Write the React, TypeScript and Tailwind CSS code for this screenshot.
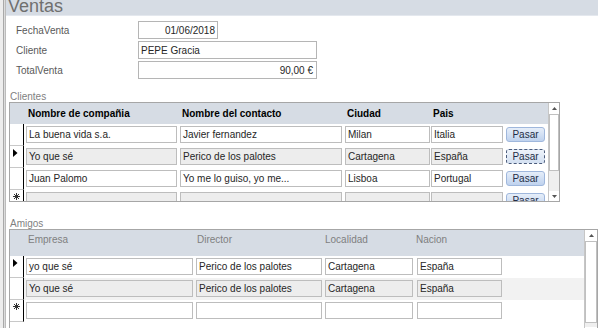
import React from "react";

const F = { fontFamily: '"Liberation Sans", Arial, sans-serif' };

function Field({ w, text = "", gray = false, right = false, cls = "" }: { w: string; text?: string; gray?: boolean; right?: boolean; cls?: string }) {
  return (
    <div
      className={`${w} ${cls} h-[17px] shrink-0 border border-[#bdbdbd] ${gray ? "bg-[#ededed]" : "bg-white"} flex items-center px-[2px] overflow-hidden whitespace-nowrap text-[10px] leading-[12px] text-[#262626] ${right ? "justify-end" : ""}`}
    >
      {text}
    </div>
  );
}

function Arrow() {
  return (
    <svg width="5" height="8" viewBox="0 0 5 8" className="mt-[3px] ml-[3px]">
      <path d="M0 0 L4.5 4 L0 8 Z" fill="#000" />
    </svg>
  );
}

function Star() {
  return (
    <svg width="7" height="7" viewBox="0 0 7 7" className="mt-[3px] ml-[3px]">
      <g stroke="#333" strokeWidth="1">
        <line x1="3.5" y1="0" x2="3.5" y2="7" />
        <line x1="0" y1="3.5" x2="7" y2="3.5" />
        <line x1="1" y1="1" x2="6" y2="6" />
        <line x1="6" y1="1" x2="1" y2="6" />
      </g>
    </svg>
  );
}

function Selector({ kind }: { kind?: "arrow" | "star" }) {
  return (
    <div className="w-[14px] h-full shrink-0 border-r border-r-black border-b border-b-[#c8c8c8] bg-white flex items-start">
      {kind === "arrow" ? <Arrow /> : kind === "star" ? <Star /> : null}
    </div>
  );
}

function Pasar({ focus = false }: { focus?: boolean }) {
  return (
    <div
      className={`ml-[3px] mt-[3px] w-[39px] h-[15px] shrink-0 rounded-[3px] flex items-center justify-center text-[10px] leading-[12px] text-[#1f2d45] ${
        focus
          ? "border border-dashed border-[#4b5c7c] bg-gradient-to-b from-[#eef3fa] to-[#d3e0f1]"
          : "border border-[#9fb7dc] bg-gradient-to-b from-[#e6eef9] to-[#bfd2ee]"
      }`}
    >
      Pasar
    </div>
  );
}

function ScrollBar({ w, thumb, track }: { w: string; thumb: string; track: string }) {
  return (
    <div className={`${w} shrink-0 h-full border-l border-[#c6c6c6] bg-white flex flex-col`}>
      <div className="h-[11px] shrink-0 flex items-center justify-center">
        <svg width="5" height="3" viewBox="0 0 5 3"><path d="M0 3 L2.5 0 L5 3 Z" fill="#555" /></svg>
      </div>
      <div className={`${thumb} shrink-0 border border-[#c0c0c0] bg-white`} />
      <div className={`${track} shrink-0 bg-[#efefef]`} />
      <div className="h-[11px] shrink-0 flex items-center justify-center bg-white">
        <svg width="5" height="3" viewBox="0 0 5 3"><path d="M0 0 L2.5 3 L5 0 Z" fill="#555" /></svg>
      </div>
    </div>
  );
}

export default function App() {
  return (
    <div className="w-[600px] h-[328px] overflow-hidden bg-white flex" style={F}>
      {/* left edge */}
      <div className="w-[3px] h-full bg-[#ededed] shrink-0" />
      <div className="w-[1px] h-full bg-[#a9a9a9] shrink-0" />
      <div className="w-[1px] h-full bg-[#dcdcdc] shrink-0" />
      <div className="w-[1px] h-full bg-[#bcbcbc] shrink-0" />

      <div className="flex-1 flex flex-col">
        {/* title band */}
        <div className="h-[16px] shrink-0 bg-[#d6dce4] border-b border-[#e4e8ee] overflow-hidden mr-[2px]">
          <div className="pl-[2px] mt-[-3px] text-[18px] leading-[18px] text-[#6f6f6f]">Ventas</div>
        </div>

        {/* main fields */}
        <div className="mt-[5px] shrink-0 flex flex-col gap-[2px]">
          <div className="flex items-center h-[18px]">
            <div className="w-[132px] pl-[10px] text-[10px] text-[#595959]">FechaVenta</div>
            <div className="w-[80px] h-[18px] border border-[#b5b5b5] flex items-center justify-end pr-[2px] text-[10px] text-[#262626]">01/06/2018</div>
          </div>
          <div className="flex items-center h-[18px]">
            <div className="w-[132px] pl-[10px] text-[10px] text-[#595959]">Cliente</div>
            <div className="w-[179px] h-[18px] border border-[#b5b5b5] flex items-center pl-[2px] text-[10px] text-[#262626]">PEPE Gracia</div>
          </div>
          <div className="flex items-center h-[18px]">
            <div className="w-[132px] pl-[10px] text-[10px] text-[#595959]">TotalVenta</div>
            <div className="w-[179px] h-[18px] border border-[#b5b5b5] flex items-center justify-end pr-[3px] text-[10px] text-[#262626]">90,00 €</div>
          </div>
        </div>

        {/* Clientes */}
        <div className="mt-[12px] shrink-0 pl-[4px] h-[11px] text-[10px] leading-[11px] text-[#7f7f7f]">Clientes</div>
        <div className="ml-[3px] shrink-0 w-[551px] h-[100px] border border-[#a6a6a6] flex overflow-hidden">
          <div className="flex-1 flex flex-col">
            <div className="h-[21px] shrink-0 bg-[#d6dce4] flex items-center text-[10px] font-bold text-black">
              <div className="w-[17px]" />
              <div className="w-[154px] pl-[1px]">Nombre de compañia</div>
              <div className="w-[165px] pl-[1px]">Nombre del contacto</div>
              <div className="w-[86px] pl-[1px]">Ciudad</div>
              <div className="pl-[1px]">Pais</div>
            </div>
            {[
              { a: "La buena vida s.a.", b: "Javier fernandez", c: "Milan", d: "Italia", g: false, sel: undefined, focus: false },
              { a: "Yo que sé", b: "Perico de los palotes", c: "Cartagena", d: "España", g: true, sel: "arrow", focus: true },
              { a: "Juan Palomo", b: "Yo me lo guiso, yo me...", c: "Lisboa", d: "Portugal", g: false, sel: undefined, focus: false },
              { a: "", b: "", c: "", d: "", g: true, sel: "star", focus: false },
            ].map((r, i) => (
              <div key={i} className="h-[22px] shrink-0 flex items-start">
                <Selector kind={r.sel as any} />
                <Field w="w-[151px]" cls="ml-[2px] mt-[2px]" text={r.a} gray={r.g} />
                <Field w="w-[162px]" cls="ml-[3px] mt-[2px]" text={r.b} gray={r.g} />
                <Field w="w-[85px]" cls="ml-[3px] mt-[2px]" text={r.c} gray={r.g} />
                <Field w="w-[72px]" cls="ml-[1px] mt-[2px]" text={r.d} gray={r.g} />
                <Pasar focus={r.focus} />
              </div>
            ))}
          </div>
          <ScrollBar w="w-[11px]" thumb="h-[57px]" track="h-[20px]" />
        </div>

        {/* Amigos */}
        <div className="mt-[17px] shrink-0 pl-[4px] h-[10px] text-[10px] leading-[10px] text-[#7f7f7f]">Amigos</div>
        <div className="ml-[3px] shrink-0 w-[589px] h-[110px] border border-[#a6a6a6] border-b-0 flex overflow-hidden">
          <div className="flex-1 flex flex-col">
            <div className="h-[26px] shrink-0 bg-[#d6dce4] flex items-start pt-[4px] text-[10px] leading-[12px] text-[#7f7f7f]">
              <div className="w-[17px]" />
              <div className="w-[169px] pl-[1px]">Empresa</div>
              <div className="w-[128px] pl-[1px]">Director</div>
              <div className="w-[91px] pl-[1px]">Localidad</div>
              <div className="pl-[1px]">Nacion</div>
            </div>
            {[
              { a: "yo que sé", b: "Perico de los palotes", c: "Cartagena", d: "España", g: false, sel: "arrow" },
              { a: "Yo que sé", b: "Perico de los palotes", c: "Cartagena", d: "España", g: true, sel: undefined },
              { a: "", b: "", c: "", d: "", g: false, sel: "star" },
            ].map((r, i) => (
              <div key={i} className={`h-[22px] shrink-0 flex items-start ${r.g ? "bg-[#f2f2f2]" : "bg-white"}`}>
                <Selector kind={r.sel as any} />
                <Field w="w-[167px]" cls="ml-[2px] mt-[2px]" text={r.a} gray={r.g} />
                <Field w="w-[126px]" cls="ml-[3px] mt-[2px]" text={r.b} gray={r.g} />
                <Field w="w-[88px]" cls="ml-[3px] mt-[2px]" text={r.c} gray={r.g} />
                <Field w="w-[85px]" cls="ml-[4px] mt-[2px]" text={r.d} gray={r.g} />
              </div>
            ))}
          </div>
          <ScrollBar w="w-[13px]" thumb="h-[82px]" track="h-[4px]" />
        </div>
      </div>
    </div>
  );
}
